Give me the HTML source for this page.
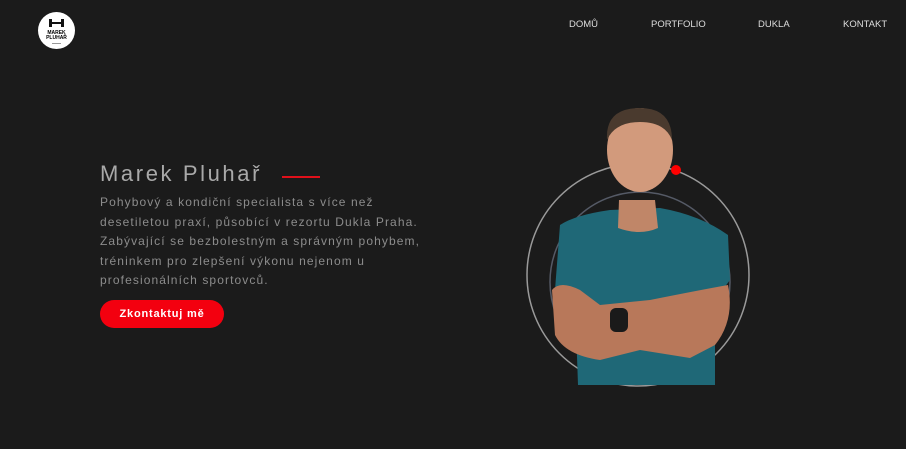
<!DOCTYPE html>
<html><head><meta charset="utf-8"><style>
html,body{margin:0;width:906px;height:449px;background:#1b1b1b;overflow:hidden;font-family:"Liberation Sans",sans-serif}
.logo{position:absolute;left:38px;top:12px;width:37px;height:37px;border-radius:50%;background:#fff;text-align:center;color:#111}
.nav a{position:absolute;top:19px;font-size:9.5px;color:#ddd;letter-spacing:0}
h1{position:absolute;left:100px;top:161px;margin:0;font-weight:400;font-size:22px;letter-spacing:2.6px;color:#a9a9a9}
.bar{position:absolute;left:282px;top:176px;width:38px;height:2px;background:#e0101a}
p{position:absolute;left:100px;top:193px;margin:0;width:340px;font-size:12px;line-height:19.5px;letter-spacing:1.1px;color:#8c8c8c}
.btn{position:absolute;left:100px;top:300px;width:124px;height:28px;border-radius:14px;background:#f3000f;color:#fff;font-size:11px;font-weight:bold;letter-spacing:.8px;text-align:center;line-height:28px}
</style></head><body>
<div class="logo"><svg width="37" height="37" style="position:absolute;left:0;top:0"><rect x="12" y="10" width="13" height="2" fill="#111"/><rect x="11" y="7" width="3" height="8" fill="#111"/><rect x="23" y="7" width="3" height="8" fill="#111"/><text x="18.5" y="22" font-size="5" font-weight="bold" text-anchor="middle" font-family="Liberation Sans">MAREK</text><text x="18.5" y="27" font-size="5" font-weight="bold" text-anchor="middle" font-family="Liberation Sans">PLUHAŘ</text><rect x="14" y="31" width="9" height="1" fill="#999"/></svg></div>
<div class="nav"><a style="left:569px">DOMŮ</a><a style="left:651px">PORTFOLIO</a><a style="left:758px">DUKLA</a><a style="left:843px">KONTAKT</a></div>
<h1>Marek Pluhař</h1><div class="bar"></div>
<p>Pohybový a kondiční specialista s více než desetiletou praxí, působící v rezortu Dukla Praha. Zabývající se bezbolestným a správným pohybem, tréninkem pro zlepšení výkonu nejenom u profesionálních sportovců.</p>
<div class="btn">Zkontaktuj mě</div>
<svg width="906" height="449" style="position:absolute;left:0;top:0">
<circle cx="638" cy="275" r="111" fill="none" stroke="#9a9a9a" stroke-width="1.5"/>
<circle cx="640" cy="282" r="90" fill="none" stroke="#555a66" stroke-width="1.5"/>
<circle cx="676" cy="170" r="5" fill="#f00"/>
<path d="M560 225 Q575 215 610 210 L660 208 Q700 215 728 235 L730 280 L715 300 L715 385 L578 385 L575 300 L555 290 Z" fill="#1f6877"/>
<path d="M552 290 Q560 280 580 290 L600 305 L650 300 Q700 290 728 285 Q735 320 715 345 L690 358 L640 350 L600 360 Q565 355 555 335 Z" fill="#b8785a"/>
<rect x="610" y="308" width="18" height="24" rx="6" fill="#1a1a1a"/>
<path d="M619 200 L655 200 L658 228 Q640 236 618 228 Z" fill="#c08668"/>
<ellipse cx="640" cy="150" rx="33" ry="42" fill="#d29a7c"/>
<path d="M607 140 Q605 108 640 108 Q672 108 672 140 Q665 122 640 122 Q615 122 607 140 Z" fill="#4a3a2e"/>
</svg>
</body></html>
